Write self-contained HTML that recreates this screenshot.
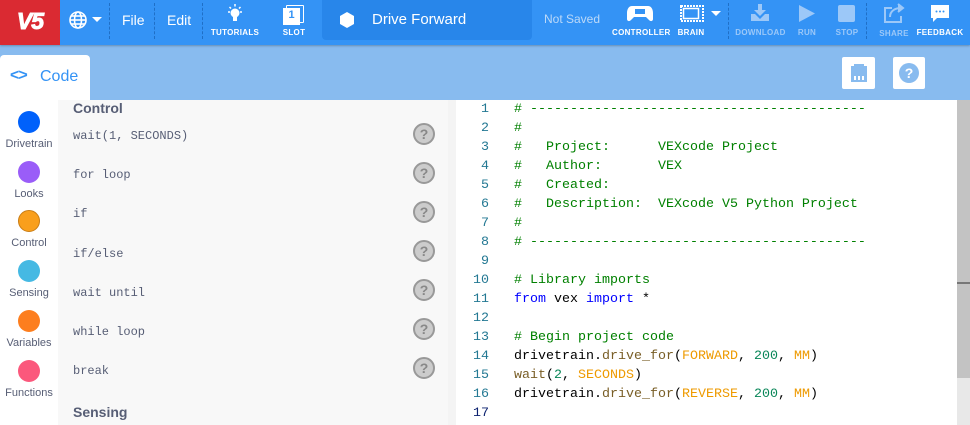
<!DOCTYPE html>
<html><head><style>
*{margin:0;padding:0;box-sizing:border-box}
body{width:970px;height:425px;overflow:hidden;font-family:"Liberation Sans",sans-serif;background:#fff;position:relative}
.abs{position:absolute}
.top{left:0;top:0;width:970px;height:45px;background:#3493f5;box-shadow:0 1px 2px rgba(0,0,0,.25);z-index:2}
.lbl{position:absolute;font-size:8px;font-weight:bold;color:#fff;letter-spacing:.3px;text-align:center}
.dim{color:#9cc8f8}
.sep{position:absolute;top:3px;height:36px;border-left:1px dashed #1f6fc6}
.bar2{left:0;top:45px;width:970px;height:55px;background:#88bbef}
.code{font-family:"Liberation Mono",monospace;font-size:13.33px}
.ln{position:absolute;left:448px;width:41px;text-align:right;color:#237893}
.cl{position:absolute;left:514px;white-space:pre;color:#000}
.c{color:#008000}.k{color:#0000ff}.f{color:#795e26}.o{color:#ee9a00}.n{color:#098658}
.cat{position:absolute;left:0;width:58px;text-align:center;font-size:11px;color:#575e75}
.dot{width:22px;height:22px;border-radius:50%;margin:0 auto 5px}
.item{position:absolute;left:73px;font-family:"Liberation Mono",monospace;font-size:12px;color:#575e75}
.q{position:absolute;left:413px;width:22px;height:22px;border-radius:50%;background:#ccc;border:2px solid #999;color:#888;font-weight:bold;font-size:14px;text-align:center;line-height:18px}
</style></head><body>
<div class="abs top">
  <div class="abs" style="left:0;top:0;width:60px;height:45px;background:#da2a32;color:#fff;font-weight:bold;font-style:italic;font-size:23px;text-align:center;line-height:42px;letter-spacing:-1px;-webkit-text-stroke:1px #fff">V5</div>
  <svg class="abs" style="left:68px;top:10px" width="20" height="20" viewBox="0 0 20 20" fill="none" stroke="#fff" stroke-width="1.6"><circle cx="10" cy="10" r="8"/><ellipse cx="10" cy="10" rx="3.5" ry="8"/><line x1="2" y1="10" x2="18" y2="10"/><line x1="3.5" y1="6" x2="16.5" y2="6"/><line x1="3.5" y1="14" x2="16.5" y2="14"/></svg>
  <div class="abs" style="left:92px;top:17px;border-left:5px solid transparent;border-right:5px solid transparent;border-top:5px solid #fff"></div>
  <div class="sep" style="left:109px"></div>
  <div class="abs" style="left:122px;top:12px;color:#fff;font-size:14px">File</div>
  <div class="sep" style="left:154px"></div>
  <div class="abs" style="left:167px;top:12px;color:#fff;font-size:14px">Edit</div>
  <div class="sep" style="left:202px"></div>
  <svg class="abs" style="left:226px;top:3px" width="18" height="20" viewBox="0 0 18 20"><circle cx="9" cy="10" r="4.5" fill="#fff"/><rect x="7" y="14" width="4" height="4" fill="#fff"/><g stroke="#fff" stroke-width="1.5"><line x1="9" y1="1" x2="9" y2="3.5"/><line x1="2" y1="9" x2="4" y2="9"/><line x1="14" y1="9" x2="16" y2="9"/><line x1="3.5" y1="4" x2="5" y2="5.5"/><line x1="14.5" y1="4" x2="13" y2="5.5"/></g></svg>
  <div class="lbl" style="left:210px;top:28px;width:50px">TUTORIALS</div>
  <div class="abs" style="left:286px;top:5px;width:18px;height:18px;border:1.5px solid #fff;border-radius:1px"></div>
  <div class="abs" style="left:283px;top:8px;width:17px;height:17px;background:#fff;color:#3493f5;font-size:11px;font-weight:bold;text-align:center;line-height:15px">1</div>
  <div class="lbl" style="left:280px;top:28px;width:28px">SLOT</div>
  <div class="abs" style="left:322px;top:0;width:210px;height:40px;background:#2886ea;border-radius:0 0 4px 4px"></div>
  <svg class="abs" style="left:340px;top:12px" width="14" height="16" viewBox="0 0 14 16"><polygon points="7,0 14,4 14,12 7,16 0,12 0,4" fill="#fff"/></svg>
  <div class="abs" style="left:372px;top:11px;color:#fff;font-size:15px">Drive Forward</div>
  <div class="abs" style="left:544px;top:12px;color:#bcd9f8;font-size:12px">Not Saved</div>
  <svg class="abs" style="left:627px;top:5px" width="26" height="17" viewBox="0 0 26 17"><path d="M5 1h16c3 0 5 3 5 7v6c0 2-2 3-4 1l-3-3H7l-3 3c-2 2-4 1-4-1V8c0-4 2-7 5-7z" fill="#fff"/><rect x="8" y="4" width="10" height="5" fill="#3493f5"/></svg>
  <div class="lbl" style="left:612px;top:28px;width:58px">CONTROLLER</div>
  <svg class="abs" style="left:680px;top:5px" width="24" height="17" viewBox="0 0 24 17"><rect x="1" y="1" width="22" height="15" fill="none" stroke="#fff" stroke-width="2" stroke-dasharray="2 1"/><rect x="3.5" y="3.5" width="15" height="10" fill="none" stroke="#fff" stroke-width="1.5"/></svg>
  <div class="abs" style="left:711px;top:11px;border-left:5px solid transparent;border-right:5px solid transparent;border-top:5px solid #fff"></div>
  <div class="lbl" style="left:676px;top:28px;width:30px">BRAIN</div>
  <div class="sep" style="left:728px"></div>
  <svg class="abs" style="left:750px;top:4px" width="20" height="18" viewBox="0 0 20 18" fill="#9cc8f8"><rect x="8" y="0" width="4" height="7"/><polygon points="4,6 16,6 10,12"/><path d="M1 10h4l5 5 5-5h4v7H1z"/></svg>
  <div class="lbl dim" style="left:733px;top:28px;width:55px">DOWNLOAD</div>
  <svg class="abs" style="left:799px;top:5px" width="16" height="17"><polygon points="0,0 16,8.5 0,17" fill="#9cc8f8"/></svg>
  <div class="lbl dim" style="left:794px;top:28px;width:26px">RUN</div>
  <div class="abs" style="left:838px;top:5px;width:17px;height:17px;background:#9cc8f8;border-radius:2px"></div>
  <div class="lbl dim" style="left:832px;top:28px;width:30px">STOP</div>
  <div class="sep" style="left:866px"></div>
  <svg class="abs" style="left:883px;top:2px" width="24" height="21" viewBox="0 0 24 21" fill="none" stroke="#9cc8f8" stroke-width="2"><path d="M9 6H2v14h16v-6"/><path d="M7 15c0-6 5-9 11-9"/><path d="M15 2l5 4-5 4" fill="#9cc8f8"/></svg>
  <div class="lbl dim" style="left:878px;top:29px;width:32px">SHARE</div>
  <svg class="abs" style="left:930px;top:5px" width="20" height="18" viewBox="0 0 20 18"><path d="M1 0h18v13H7l-4 4v-4H1z" fill="#fff"/><circle cx="6.5" cy="6.5" r="1" fill="#3493f5"/><circle cx="10" cy="6.5" r="1" fill="#3493f5"/><circle cx="13.5" cy="6.5" r="1" fill="#3493f5"/></svg>
  <div class="lbl" style="left:915px;top:28px;width:50px">FEEDBACK</div>
</div>
<div class="abs bar2"></div>
<div class="abs" style="left:0;top:55px;width:90px;height:45px;background:#fff;border-radius:4px 4px 0 0"></div>
<div class="abs" style="left:10px;top:67px;color:#3493f5;font-weight:bold;font-size:16px;letter-spacing:-1px">&lt;&gt;</div>
<div class="abs" style="left:40px;top:68px;color:#3493f5;font-size:16px">Code</div>
<div class="abs" style="left:842px;top:57px;width:33px;height:32px;background:#fff;border-radius:2px"></div>
<svg class="abs" style="left:849px;top:63px" width="20" height="20" viewBox="0 0 20 20"><path d="M2 3h3V1h10v2h3v16H2z" fill="#88bbef"/><rect x="5" y="13" width="2" height="4" fill="#fff"/><rect x="9" y="13" width="2" height="4" fill="#fff"/><rect x="13" y="13" width="2" height="4" fill="#fff"/></svg>
<div class="abs" style="left:893px;top:57px;width:32px;height:32px;background:#fff;border-radius:2px"></div>
<div class="abs" style="left:899px;top:63px;width:20px;height:20px;border-radius:50%;background:#88bbef;color:#fff;font-weight:bold;font-size:14px;text-align:center;line-height:20px">?</div>

<div class="abs" style="left:58px;top:100px;width:390px;height:325px;background:#f8f8f8"></div>
<div class="abs" style="left:448px;top:100px;width:8px;height:325px;background:#f4f4f4"></div>
<div class="abs" style="left:957px;top:100px;width:13px;height:325px;background:#e8e8e8"></div>
<div class="abs" style="left:957px;top:100px;width:13px;height:278px;background:#c3c3c3"></div>
<div class="abs" style="left:957px;top:282px;width:13px;height:2px;background:#777"></div>

<div class="cat" style="top:111px"><div class="dot" style="background:#0061fb"></div>Drivetrain</div>
<div class="cat" style="top:161px"><div class="dot" style="background:#9a5df8"></div>Looks</div>
<div class="cat" style="top:210px"><div class="dot" style="background:#f99f1c;border:1px solid #c97d15"></div>Control</div>
<div class="cat" style="top:260px"><div class="dot" style="background:#45b9e3"></div>Sensing</div>
<div class="cat" style="top:310px"><div class="dot" style="background:#fd7e1e"></div>Variables</div>
<div class="cat" style="top:360px"><div class="dot" style="background:#fb587c"></div>Functions</div>

<div class="abs" style="left:73px;top:100px;font-weight:bold;font-size:14px;color:#575e75">Control</div>
<div class="item" style="top:129px">wait(1, SECONDS)</div><div class="q" style="top:123px">?</div>
<div class="item" style="top:168px">for loop</div><div class="q" style="top:162px">?</div>
<div class="item" style="top:207px">if</div><div class="q" style="top:201px">?</div>
<div class="item" style="top:247px">if/else</div><div class="q" style="top:240px">?</div>
<div class="item" style="top:286px">wait until</div><div class="q" style="top:279px">?</div>
<div class="item" style="top:325px">while loop</div><div class="q" style="top:318px">?</div>
<div class="item" style="top:364px">break</div><div class="q" style="top:357px">?</div>
<div class="abs" style="left:73px;top:404px;font-weight:bold;font-size:14px;color:#575e75">Sensing</div>

<div class="code">
<div class="ln" style="top:102px">1</div><div class="cl c" style="top:102px"># ------------------------------------------</div>
<div class="ln" style="top:121px">2</div><div class="cl c" style="top:121px">#</div>
<div class="ln" style="top:140px">3</div><div class="cl c" style="top:140px">#   Project:      VEXcode Project</div>
<div class="ln" style="top:159px">4</div><div class="cl c" style="top:159px">#   Author:       VEX</div>
<div class="ln" style="top:178px">5</div><div class="cl c" style="top:178px">#   Created:</div>
<div class="ln" style="top:197px">6</div><div class="cl c" style="top:197px">#   Description:  VEXcode V5 Python Project</div>
<div class="ln" style="top:216px">7</div><div class="cl c" style="top:216px">#</div>
<div class="ln" style="top:235px">8</div><div class="cl c" style="top:235px"># ------------------------------------------</div>
<div class="ln" style="top:254px">9</div>
<div class="ln" style="top:273px">10</div><div class="cl c" style="top:273px"># Library imports</div>
<div class="ln" style="top:292px">11</div><div class="cl" style="top:292px"><span class="k">from</span> vex <span class="k">import</span> *</div>
<div class="ln" style="top:311px">12</div>
<div class="ln" style="top:330px">13</div><div class="cl c" style="top:330px"># Begin project code</div>
<div class="ln" style="top:349px">14</div><div class="cl" style="top:349px">drivetrain.<span class="f">drive_for</span>(<span class="o">FORWARD</span>, <span class="n">200</span>, <span class="o">MM</span>)</div>
<div class="ln" style="top:368px">15</div><div class="cl" style="top:368px"><span class="f">wait</span>(<span class="n">2</span>, <span class="o">SECONDS</span>)</div>
<div class="ln" style="top:387px">16</div><div class="cl" style="top:387px">drivetrain.<span class="f">drive_for</span>(<span class="o">REVERSE</span>, <span class="n">200</span>, <span class="o">MM</span>)</div>
<div class="ln" style="top:406px;color:#0b216f">17</div>
</div>
</body></html>
